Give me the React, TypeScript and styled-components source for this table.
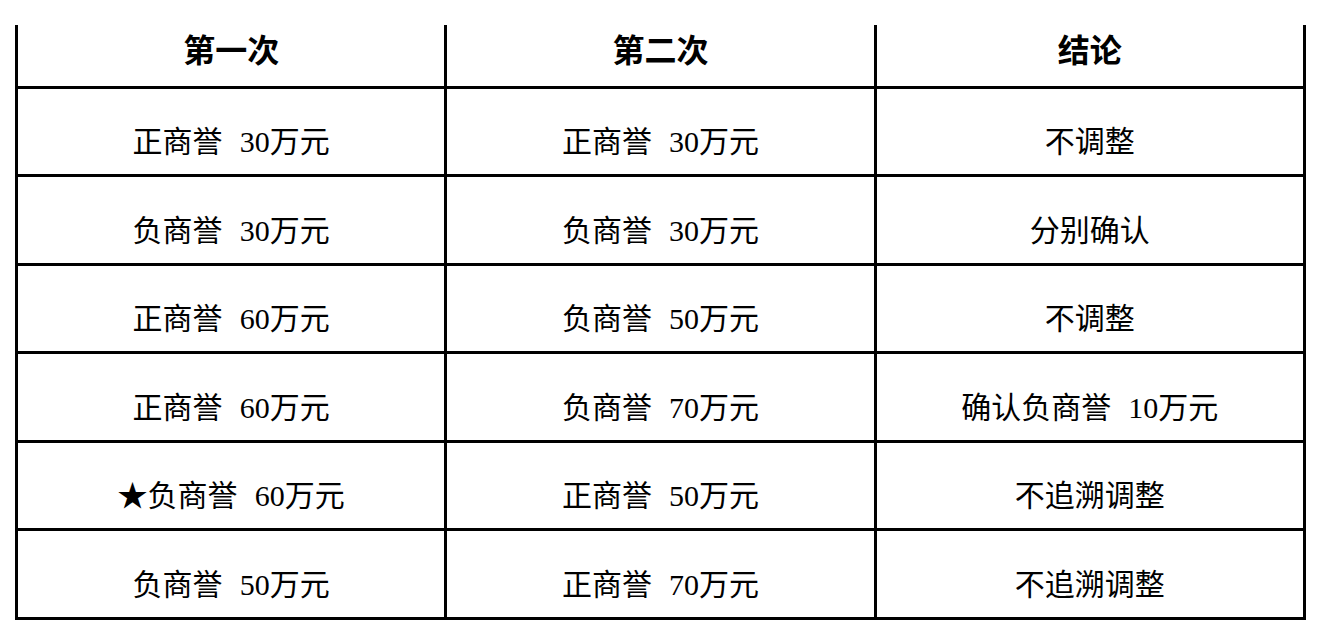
import React from 'react'
import styled, { createGlobalStyle } from 'styled-components'

const GlobalStyle = createGlobalStyle`
  html, body {
    margin: 0;
    padding: 0;
    background: #ffffff;
  }
  body {
    font-family: 'Liberation Serif', 'Noto Sans CJK SC', serif;
    color: #000;
  }
`

const Page = styled.div`
  padding: 25px 0 0 15px;
`

const Table = styled.table`
  width: 1291px;
  border-collapse: collapse;
  table-layout: fixed;
`

const HeadCell = styled.th`
  height: 62px;
  padding: 0 0 14px 0;
  border: 3px solid #000;
  border-top: none;
  font-family: 'Liberation Serif', 'Noto Sans CJK SC', serif;
  font-size: 32px;
  font-weight: 700;
  text-align: center;
  vertical-align: middle;
  box-sizing: border-box;
`

const Cell = styled.td`
  height: 88.5px;
  padding: 16px 0 0 0;
  border: 3px solid #000;
  font-size: 30px;
  font-weight: 400;
  text-align: center;
  vertical-align: middle;
  white-space: pre;
  word-spacing: 0.32em;
  box-sizing: border-box;
`

const header = ['第一次', '第二次', '结论']

const rows: string[][] = [
  ['正商誉 30万元', '正商誉 30万元', '不调整'],
  ['负商誉 30万元', '负商誉 30万元', '分别确认'],
  ['正商誉 60万元', '负商誉 50万元', '不调整'],
  ['正商誉 60万元', '负商誉 70万元', '确认负商誉 10万元'],
  ['★负商誉 60万元', '正商誉 50万元', '不追溯调整'],
  ['负商誉 50万元', '正商誉 70万元', '不追溯调整'],
]

export default function App() {
  return (
    <Page>
      <GlobalStyle />
      <Table>
        <thead>
          <tr>
            {header.map(h => (
              <HeadCell key={h}>{h}</HeadCell>
            ))}
          </tr>
        </thead>
        <tbody>
          {rows.map((row, i) => (
            <tr key={i}>
              {row.map((text, j) => (
                <Cell key={j}>{text}</Cell>
              ))}
            </tr>
          ))}
        </tbody>
      </Table>
    </Page>
  )
}
